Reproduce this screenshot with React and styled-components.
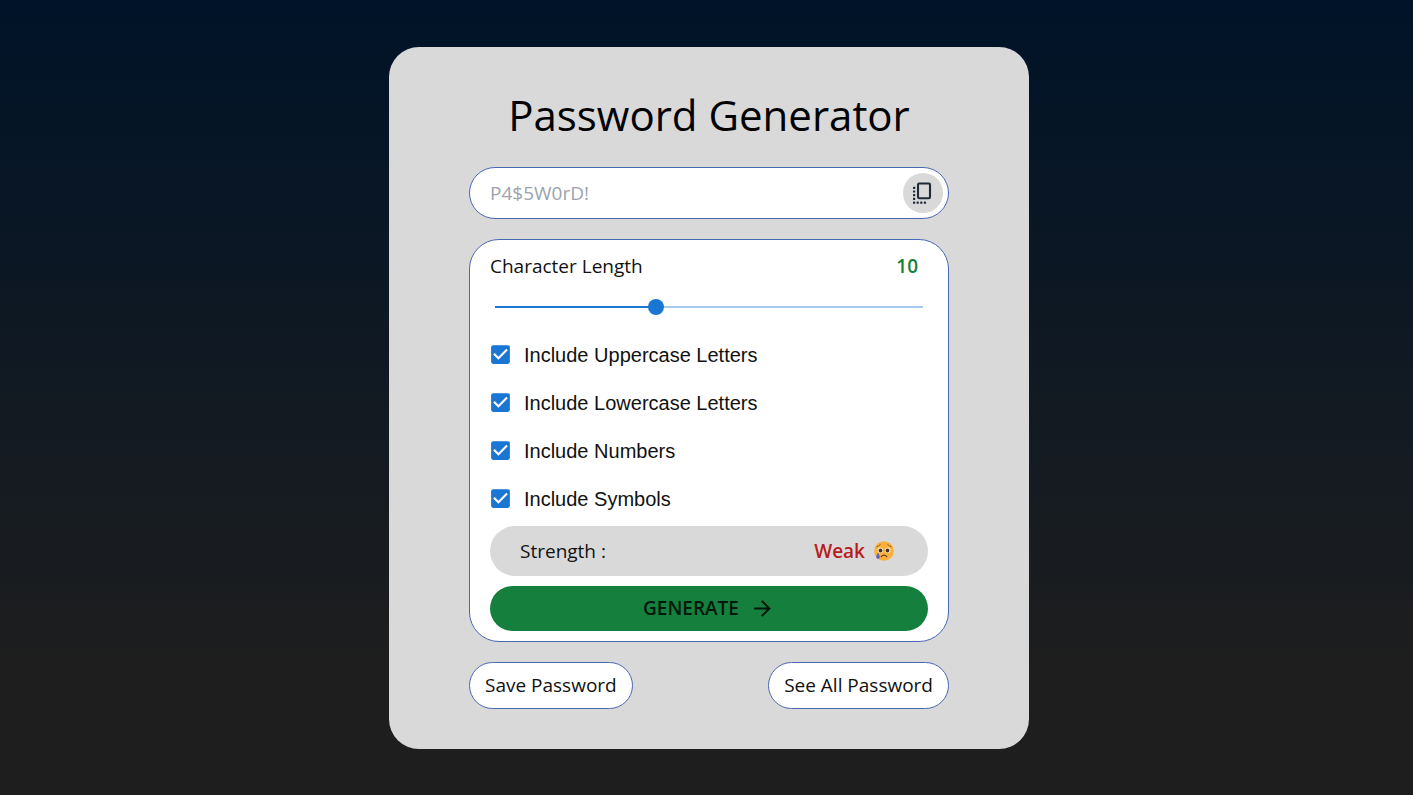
import React, { useState } from "react";
import styled, { createGlobalStyle } from "styled-components";
import { MdArrowForward, MdCheckBox, MdCheckBoxOutlineBlank } from "react-icons/md";

const GlobalStyle = createGlobalStyle`
  * { box-sizing: border-box; }
  body { margin: 0; }
  button, input { font: inherit; color: inherit; }
`;

const Page = styled.main`
  min-height: 100vh;
  display: flex;
  align-items: center;
  justify-content: center;
  padding: 20px 0 20px 5px;
  background: linear-gradient(#001328, #1e1e1e 85%);
  font-family: "Open Sans", "Noto Sans", sans-serif;
  font-size: 19px;
  line-height: 32px;
  color: #111;
`;

const Card = styled.section`
  width: 100%;
  max-width: 640px;
  display: flex;
  flex-direction: column;
  gap: 20px;
  padding: 40px 80px;
  border-radius: 30px;
  background: #d9d9d9;
`;

const Title = styled.h1`
  margin: 0 0 4px;
  font-size: 42px;
  font-weight: 400;
  line-height: 56px;
  text-align: center;
  color: #000;
`;

const PasswordBox = styled.div`
  display: flex;
  align-items: center;
  height: 52px;
  padding: 0 5px 0 20px;
  border: 1px solid #4a69b5;
  border-radius: 26px;
  background: #fff;
`;

const PasswordInput = styled.input`
  flex: 1;
  min-width: 0;
  padding: 0;
  border: 0;
  outline: 0;
  background: transparent;
  &::placeholder { color: #9ca3af; opacity: 1; }
`;

const CopyButton = styled.button`
  width: 40px;
  height: 40px;
  display: grid;
  place-items: center;
  padding: 0;
  border: 0;
  border-radius: 50%;
  background: #d9d9d9;
  color: #1f2937;
  cursor: pointer;
`;

const Panel = styled.div`
  display: flex;
  flex-direction: column;
  padding: 10px 20px;
  border: 1px solid #4a69b5;
  border-radius: 30px;
  background: #fff;
`;

const LengthRow = styled.div`
  display: flex;
  justify-content: space-between;
  height: 33px;
  padding-right: 10px;
`;

const LengthValue = styled.output`
  font-weight: 600;
  color: #15803d;
`;

const Slider = styled.input`
  appearance: none;
  height: 48px;
  margin: 0 -3px;
  cursor: pointer;
  background: linear-gradient(to right, #1976d2 var(--fill), #a7caed var(--fill))
    center / calc(100% - 16px) 2px no-repeat;
  &::-webkit-slider-thumb {
    appearance: none;
    width: 16px;
    height: 16px;
    border-radius: 50%;
    background: #1976d2;
  }
`;

const Options = styled.div`
  display: flex;
  flex-direction: column;
  margin-bottom: 3px;
`;

const Option = styled.label`
  display: flex;
  align-items: center;
  gap: 11px;
  height: 48px;
  margin-left: -2px;
  font-family: "Liberation Sans", Arial, sans-serif;
  font-size: 20px;
  cursor: pointer;
`;

const Tick = styled.span`
  display: grid;
  color: #1976d2;
  > * { grid-area: 1 / 1; }
  svg { pointer-events: none; }
`;

const TickInput = styled.input`
  width: 25px;
  height: 25px;
  margin: 0;
  opacity: 0;
`;

const Strength = styled.div`
  display: flex;
  align-items: center;
  justify-content: space-between;
  height: 50px;
  margin-bottom: 10px;
  padding: 0 34px 0 30px;
  border-radius: 25px;
  background: #d9d9d9;
`;

const Rating = styled.span`
  display: flex;
  align-items: center;
  gap: 9px;
  font-weight: 600;
  color: #b91c1c;
`;

const GenerateButton = styled.button`
  display: flex;
  align-items: center;
  justify-content: center;
  gap: 11px;
  height: 45px;
  padding: 0;
  border: 0;
  border-radius: 23px;
  background: #15803d;
  color: #03170b;
  font-weight: 600;
  cursor: pointer;
`;

const Actions = styled.div`
  display: flex;
  justify-content: space-between;
`;

const ActionButton = styled.button`
  height: 47px;
  padding: 0 15px;
  border: 1px solid #4a69b5;
  border-radius: 24px;
  background: #fff;
  cursor: pointer;
`;

const CopyIcon = () => (
  <svg width="20" height="24" viewBox="1 0 20 24" fill="currentColor" aria-hidden="true">
    <rect x="6" y="2.5" width="12" height="14.8" rx="1.2" fill="none" stroke="currentColor" strokeWidth="2.1" />
    {[6.8, 10.5, 14.2, 17.9, 21.6].map((y) => (
      <rect key={y} x="1" y={y - 1.1} width="2.2" height="2.2" rx=".5" />
    ))}
    {[5.7, 9.3, 12.9].map((x) => (
      <rect key={x} x={x - 1.1} y="20.5" width="2.2" height="2.2" rx=".5" />
    ))}
  </svg>
);

const CryingFace = () => (
  <svg width="20" height="20" viewBox="0 0 20 20" role="img" aria-label="crying face">
    <circle cx="10" cy="10" r="9.8" fill="#fbb03b" />
    <circle cx="6.3" cy="9.2" r="2.7" fill="#fff0d0" />
    <circle cx="13.7" cy="9.2" r="2.7" fill="#fff0d0" />
    <circle cx="6.5" cy="9.5" r="1.9" fill="#443126" />
    <circle cx="13.5" cy="9.5" r="1.9" fill="#443126" />
    <path d="M2.8 5.6Q5 5.3 6.4 3.6M17.2 5.6Q15 5.3 13.6 3.6" fill="none" stroke="#8b5a1e" strokeWidth=".9" strokeLinecap="round" />
    <path d="M7.2 15.7Q10 12.4 12.8 15.7" fill="none" stroke="#5f3a20" strokeWidth="1.2" strokeLinecap="round" />
    <path d="M4 11.8C3 13.4 2.2 14.8 2.2 16.1a1.8 1.8 0 0 0 3.6 0C5.8 14.8 5 13.4 4 11.8Z" fill="#5865c0" />
  </svg>
);

const MIN = 4;
const MAX = 20;
const KINDS = ["Uppercase Letters", "Lowercase Letters", "Numbers", "Symbols"];

export default function App() {
  const [length, setLength] = useState(10);
  const [checked, setChecked] = useState(KINDS.map(() => true));
  const [password, setPassword] = useState("");

  const generate = () => {
    const sets = ["ABCDEFGHIJKLMNOPQRSTUVWXYZ", "abcdefghijklmnopqrstuvwxyz", "0123456789", "!@#$%^&*?"];
    const pool = sets.filter((_, i) => checked[i]).join("");
    setPassword(Array.from({ length: pool ? length : 0 }, () => pool[Math.floor(Math.random() * pool.length)]).join(""));
  };

  return (
    <>
      <GlobalStyle />
      <Page>
        <Card>
          <Title>Password Generator</Title>
          <PasswordBox>
            <PasswordInput aria-label="Password" placeholder="P4$5W0rD!" value={password} readOnly />
            <CopyButton type="button" aria-label="Copy password" onClick={() => navigator.clipboard?.writeText(password)}>
              <CopyIcon />
            </CopyButton>
          </PasswordBox>
          <Panel>
            <LengthRow>
              <label htmlFor="length">Character Length</label>
              <LengthValue htmlFor="length">{length}</LengthValue>
            </LengthRow>
            <Slider
              id="length"
              type="range"
              min={MIN}
              max={MAX}
              value={length}
              onChange={(e) => setLength(Number(e.target.value))}
              style={{ "--fill": `${((length - MIN) / (MAX - MIN)) * 100}%` }}
            />
            <Options>
              {KINDS.map((kind, i) => (
                <Option key={kind}>
                  <Tick>
                    <TickInput
                      type="checkbox"
                      checked={checked[i]}
                      onChange={() => setChecked(checked.map((on, j) => (j === i ? !on : on)))}
                    />
                    {checked[i] ? <MdCheckBox size={25} /> : <MdCheckBoxOutlineBlank size={25} />}
                  </Tick>
                  Include {kind}
                </Option>
              ))}
            </Options>
            <Strength>
              <span>Strength :</span>
              <Rating>
                Weak <CryingFace />
              </Rating>
            </Strength>
            <GenerateButton type="button" onClick={generate}>
              GENERATE <MdArrowForward size={25} />
            </GenerateButton>
          </Panel>
          <Actions>
            <ActionButton type="button">Save Password</ActionButton>
            <ActionButton type="button">See All Password</ActionButton>
          </Actions>
        </Card>
      </Page>
    </>
  );
}
